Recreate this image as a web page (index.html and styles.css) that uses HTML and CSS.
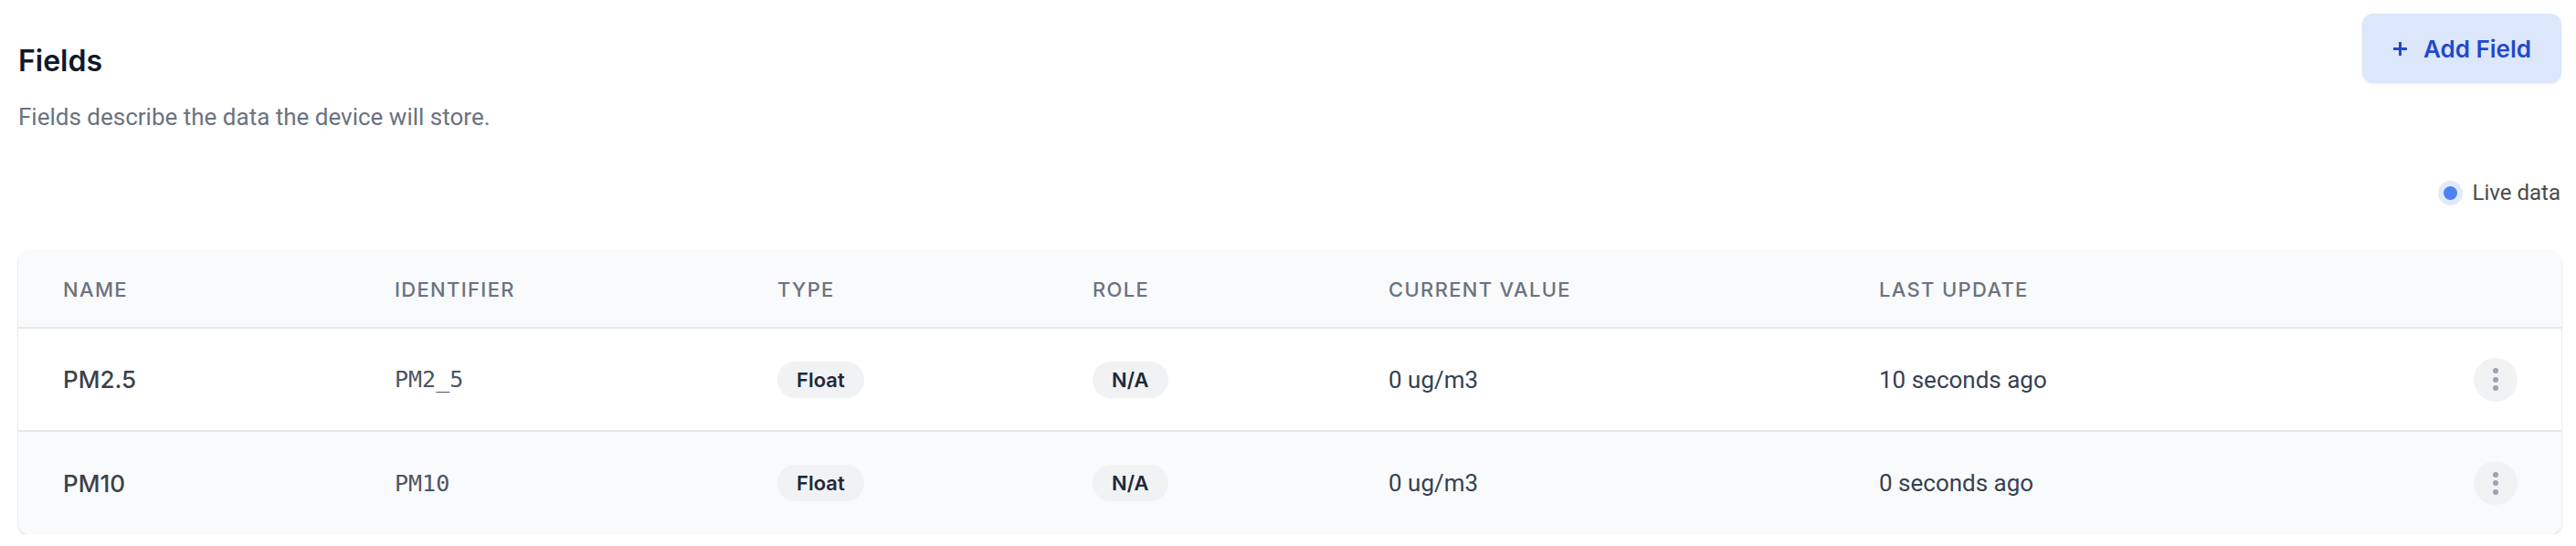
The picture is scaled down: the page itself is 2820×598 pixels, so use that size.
FILE: index.html
```html
<!DOCTYPE html>
<html lang="en">
<head>
<meta charset="utf-8">
<title>Fields</title>
<link rel="stylesheet" href="styles.css">
</head>
<body>
<div class="page">
  <header class="top">
    <div class="intro">
      <h1 class="title">Fields</h1>
      <p class="subtitle">Fields describe the data the device will store.</p>
    </div>
    <button class="add-btn" type="button">
      <svg class="plus" width="15" height="15" viewBox="0 0 15 15" aria-hidden="true"><path d="M7.5 1v13M1 7.5h13" stroke="currentColor" stroke-width="3" stroke-linecap="round"/></svg>
      <span>Add Field</span>
    </button>
  </header>

  <div class="live">
    <span class="live-dot"><span class="live-core"></span></span>
    <span class="live-label">Live data</span>
  </div>

  <div class="card">
    <div class="row head">
      <div class="th">NAME</div>
      <div class="th">IDENTIFIER</div>
      <div class="th">TYPE</div>
      <div class="th">ROLE</div>
      <div class="th">CURRENT VALUE</div>
      <div class="th">LAST UPDATE</div>
      <div></div>
    </div>
    <div class="row body">
      <div class="name">PM2.5</div>
      <div class="ident">PM2_5</div>
      <div><span class="pill">Float</span></div>
      <div><span class="pill">N/A</span></div>
      <div class="val">0 ug/m3</div>
      <div class="val">10 seconds ago</div>
      <div class="kebab"><span></span><span></span><span></span></div>
    </div>
    <div class="row body alt last">
      <div class="name">PM10</div>
      <div class="ident">PM10</div>
      <div><span class="pill">Float</span></div>
      <div><span class="pill">N/A</span></div>
      <div class="val">0 ug/m3</div>
      <div class="val">0 seconds ago</div>
      <div class="kebab"><span></span><span></span><span></span></div>
    </div>
  </div>
</div>
</body>
</html>
```

FILE: styles.css
```css
* { box-sizing: border-box; }
html, body { margin: 0; padding: 0; background: #ffffff; }
body { font-family: Roboto, "Liberation Sans", sans-serif; }

.page {
  padding: 15px 16px 0 20px;
}

.top {
  display: flex;
  justify-content: space-between;
  align-items: flex-start;
}

.intro { padding-top: 32px; }

.title {
  margin: 0;
  font-family: Inter, "Liberation Sans", sans-serif;
  font-size: 32px;
  line-height: 40px;
  font-weight: 600;
  color: #111827;
}

.subtitle {
  margin: 23px 0 0 0;
  font-size: 26px;
  line-height: 36px;
  color: #6b7280;
}

.add-btn {
  display: flex;
  align-items: center;
  gap: 18px;
  width: 218px;
  height: 76px;
  padding: 0 0 0 34px;
  border: 0;
  border-radius: 12px;
  background: #dce7fb;
  color: #2248cf;
  font-family: Inter, "Liberation Sans", sans-serif;
  font-size: 26px;
  font-weight: 600;
  box-shadow: 0 1px 3px rgba(0,0,0,0.08);
}
.plus { display: block; flex: none; }

.live {
  display: flex;
  justify-content: flex-end;
  align-items: center;
  gap: 11px;
  margin-top: 51px;
  height: 28px;
}
.live-dot {
  width: 27px;
  height: 27px;
  border-radius: 50%;
  background: #e1eafc;
  display: flex;
  align-items: center;
  justify-content: center;
}
.live-core {
  width: 15px;
  height: 15px;
  border-radius: 50%;
  background: #4e81ee;
}
.live-label {
  font-size: 24px;
  line-height: 28px;
  color: #4b4b4b;
  margin-right: 1px;
}

.card {
  margin-top: 50px;
  border-radius: 12px;
  overflow: hidden;
  background: #ffffff;
  box-shadow: 0 2px 3px rgba(0,0,0,0.12), 0 0 0 1px rgba(0,0,0,0.025);
}

.row {
  display: grid;
  grid-template-columns: 363px 419px 345px 324px 537px 1fr 48px;
  align-items: center;
  padding: 0 48px 0 49px;
}
.row.head {
  height: 85px;
  background: #f9fafb;
  border-bottom: 2px solid #e5e7eb;
}
.row.body {
  height: 113px;
  border-bottom: 2px solid #e5e7eb;
}
.row.alt { background: #f9fafb; }
.row.last { border-bottom: 0; height: 112px; }

.th {
  font-family: Inter, "Liberation Sans", sans-serif;
  font-size: 22px;
  font-weight: 500;
  letter-spacing: 0.06em;
  color: #6b7280;
}

.name {
  font-family: Inter, "Liberation Sans", sans-serif;
  font-size: 26px;
  font-weight: 500;
  color: #3f3f46;
}

.ident {
  font-family: "DejaVu Sans Mono", "Liberation Mono", monospace;
  font-size: 25px;
  color: #4b5563;
}

.pill {
  display: inline-flex;
  align-items: center;
  height: 40px;
  padding: 0 21px;
  border-radius: 20px;
  background: #f1f2f4;
  font-family: Inter, "Liberation Sans", sans-serif;
  font-size: 22px;
  font-weight: 600;
  color: #1f2937;
}

.val {
  font-size: 26px;
  color: #374151;
}

.kebab {
  width: 48px;
  height: 48px;
  border-radius: 50%;
  background: #f1f2f4;
  display: flex;
  flex-direction: column;
  align-items: center;
  justify-content: center;
  gap: 3.5px;
}
.kebab span {
  width: 6px;
  height: 6px;
  border-radius: 50%;
  background: #9ca3af;
}
```
